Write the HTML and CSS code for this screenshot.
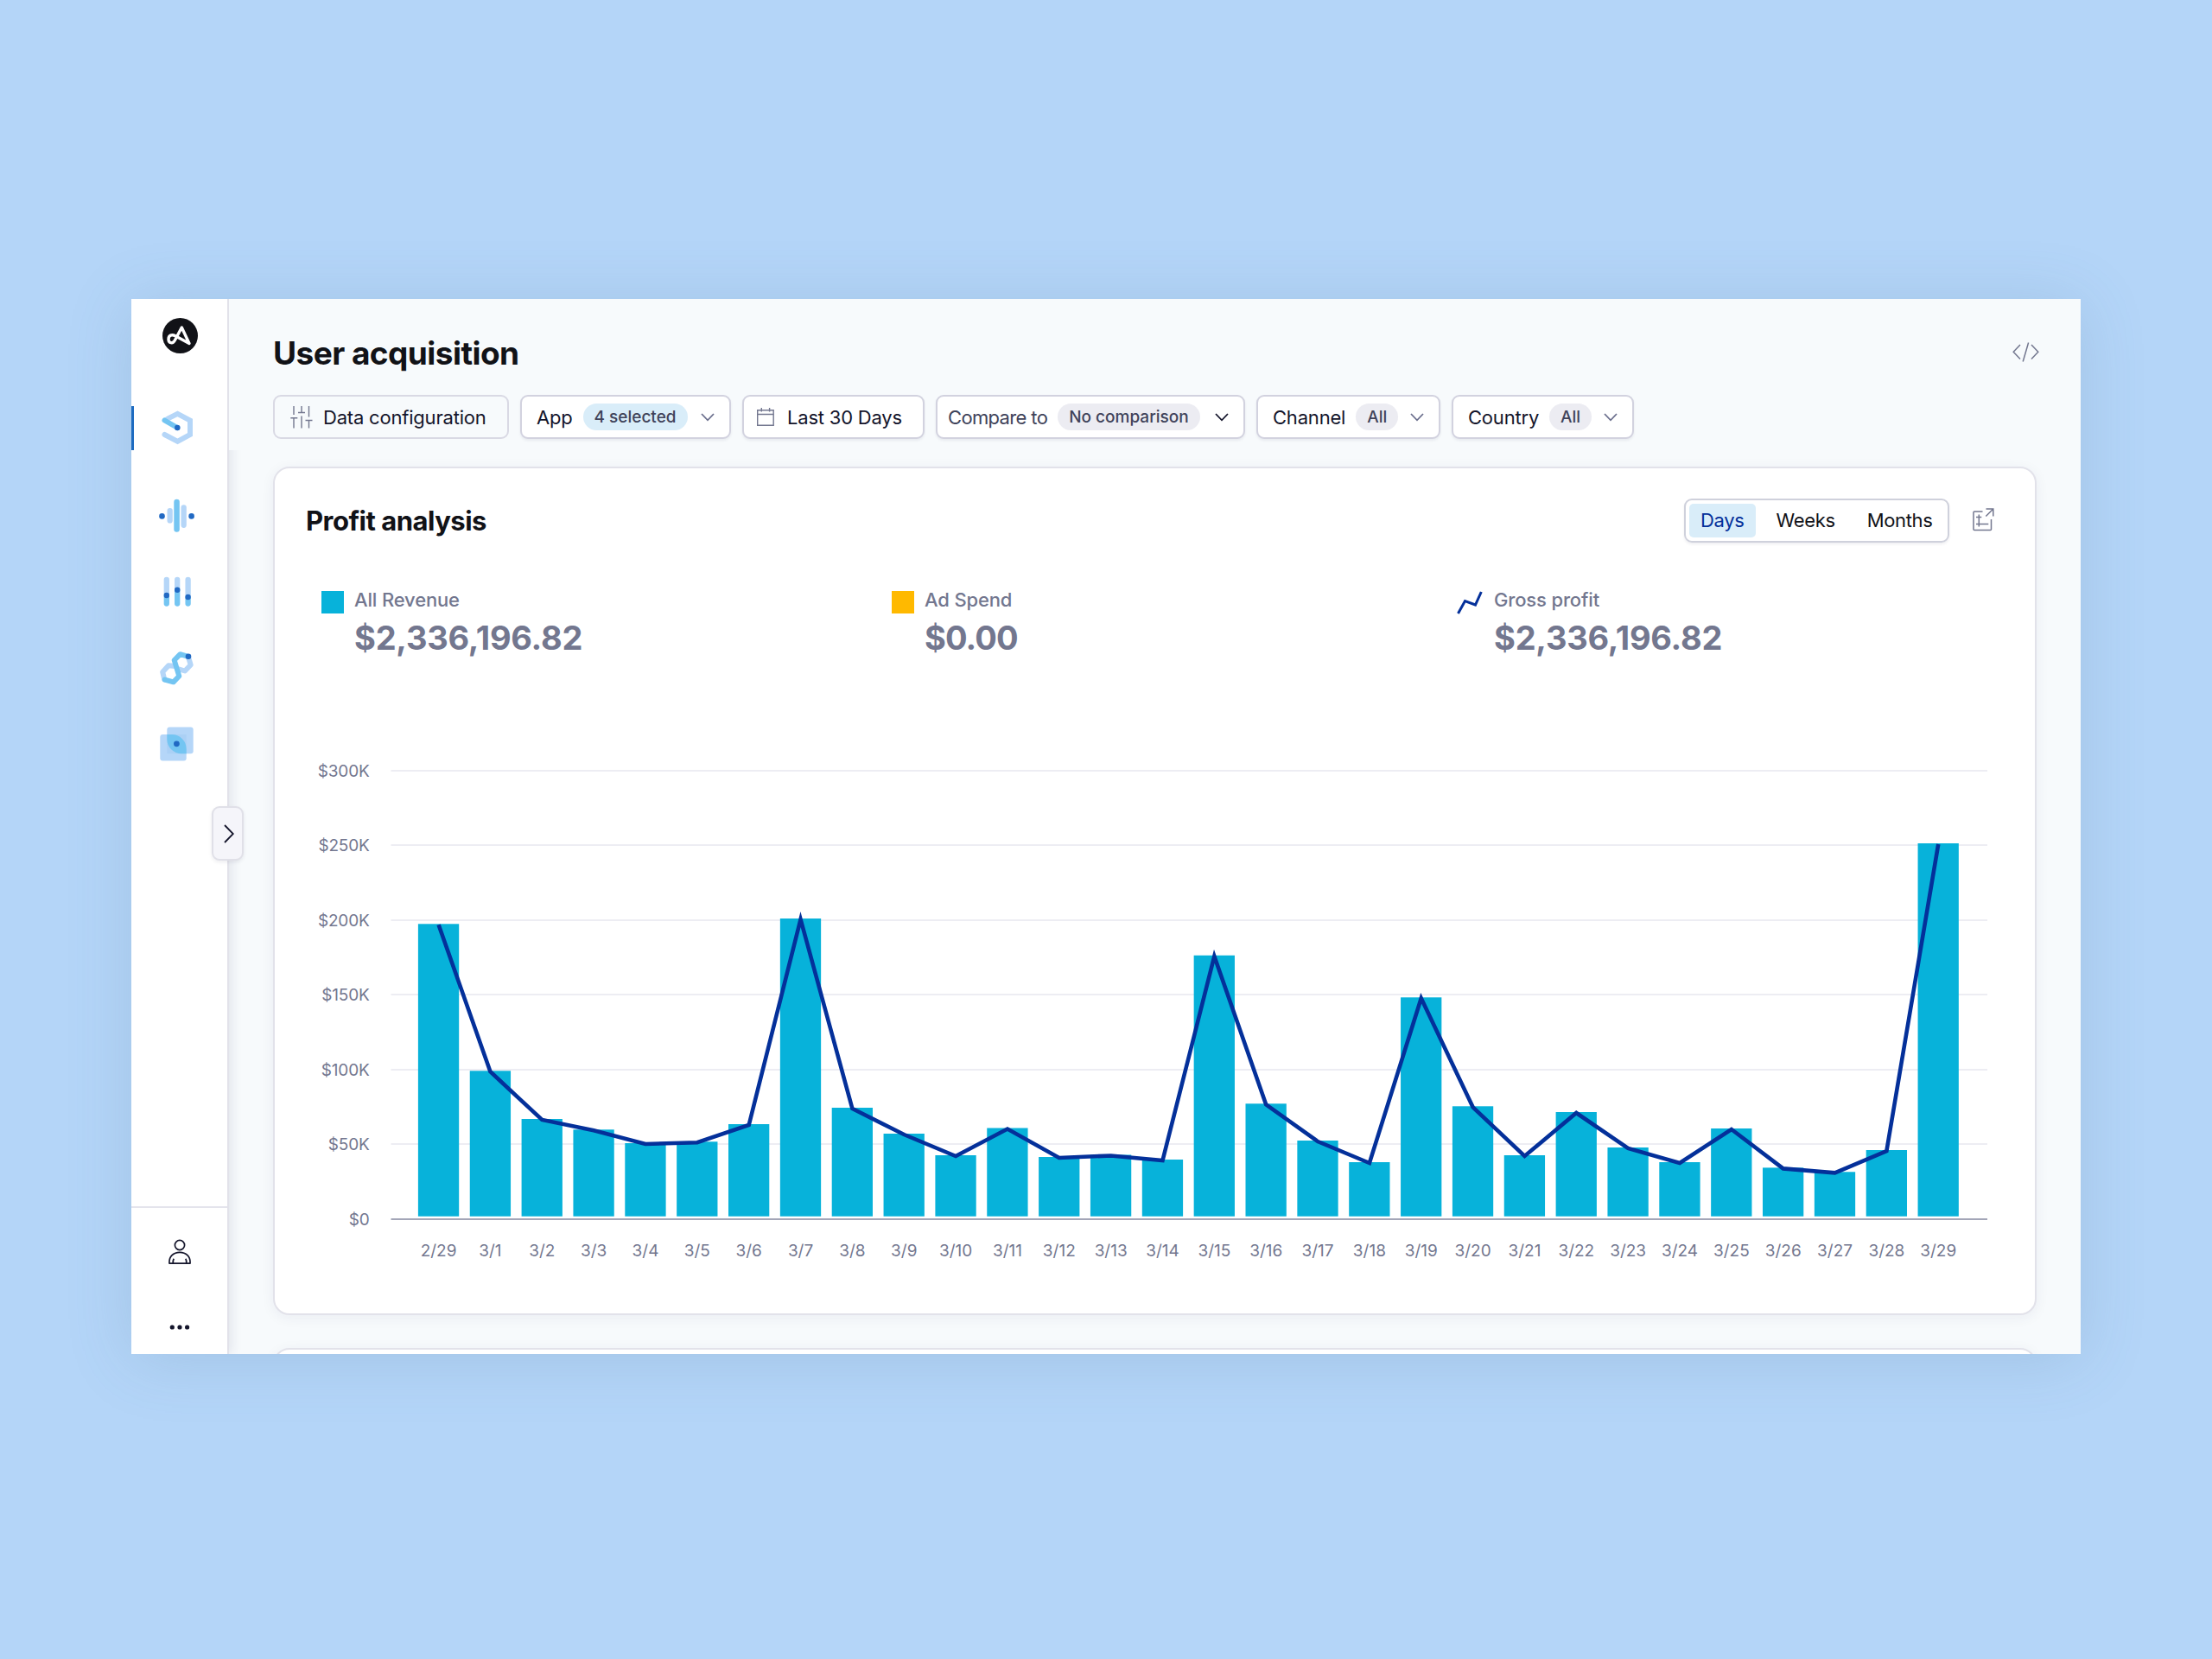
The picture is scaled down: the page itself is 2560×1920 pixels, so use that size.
FILE: index.html
```html
<!DOCTYPE html>
<html lang="en">
<head>
<meta charset="utf-8">
<title>User acquisition</title>
<link rel="stylesheet" href="styles.css">
</head>
<body>
<div class="window">
  <nav class="sidebar">
    <svg class="logo" width="41" height="41" viewBox="0 0 41 41"><circle cx="20.5" cy="20.5" r="20.5" fill="#111217"/><path d="M31 29.5 22.3 11 14.3 26C12 30.3 7 29.2 7 24.7 7 20 11 18.6 14.5 20.6Z" fill="none" stroke="#fff" stroke-width="3.4" stroke-linejoin="round"/></svg>
    <div class="nav-items">
      <a class="nav-item active"><svg width="37" height="40" viewBox="0 0 37 40" fill="none" stroke-width="6" stroke-linecap="round"><path d="M7 9.6 18.5 3.8 33 11.5V28L18.5 35.8 3.5 28" stroke="#b5d6f8"/><path d="M3.5 11.5 18.3 20" stroke="#74c5f2"/><circle cx="18.3" cy="20" r="3.2" fill="#2169c3"/></svg></a>
      <a class="nav-item"><svg width="42" height="40" viewBox="0 0 42 40"><rect x="9.5" y="11" width="6.3" height="17.6" rx="3.1" fill="#b5d6f8"/><rect x="25.5" y="7.3" width="6.3" height="26.6" rx="3.1" fill="#b5d6f8"/><rect x="17.3" y=".8" width="6.5" height="38" rx="3.2" fill="#74c5f2"/><circle cx="3.5" cy="20.4" r="3.3" fill="#2169c3"/><circle cx="37.6" cy="20.4" r="3.3" fill="#2169c3"/></svg></a>
      <a class="nav-item"><svg width="32" height="36" viewBox="0 0 32 36" stroke-width="6.3" stroke-linecap="round"><path d="M3.8 4V20M16.2 4V14M28.6 4V22" stroke="#b5d6f8"/><path d="M3.8 22.5V31.6M16.2 16V31.6M28.6 25V31.6" stroke="#74c5f2"/><g fill="#2169c3"><circle cx="3.8" cy="22" r="3.2"/><circle cx="16.2" cy="15.7" r="3.2"/><circle cx="28.6" cy="24" r="3.2"/></g></svg></a>
      <a class="nav-item"><svg width="39" height="40" viewBox="0 0 39 40" fill="none" stroke-width="6" stroke-linejoin="round" stroke-linecap="round"><path d="M33 7.5 35.7 16.5 29 23.5 20 20.8M18 18 10 17.3 3.2 24.8 5.3 33.5" stroke="#b5d6f8"/><path d="M32 6.6 23.5 4.2 16.7 11 22.3 29.5 15.7 36.3 5.7 33.6" stroke="#74c5f2"/><circle cx="33" cy="6.8" r="3.3" fill="#2169c3"/></svg></a>
      <a class="nav-item"><svg width="39" height="40" viewBox="0 0 39 40"><rect x="8.3" y=".5" width="30.4" height="30.7" rx="3" fill="#b5d6f8"/><rect x=".3" y="9" width="30.4" height="30.4" rx="3" fill="#b5d6f8"/><path d="M8.3 9H30.7V31.2H8.3Z" fill="#abd0f5"/><path d="M8.3 9H14A16.7 16.7 0 0 1 30.7 25.7V31.2H25A16.7 16.7 0 0 1 8.3 14.5Z" fill="#74c5f2"/><circle cx="19.4" cy="19.8" r="3.4" fill="#2169c3"/></svg></a>
    </div>
    <div class="nav-bottom">
      <svg width="26" height="30" viewBox="0 0 26 30" fill="none" stroke="#14152b" stroke-width="1.7" stroke-linejoin="round"><circle cx="13" cy="7" r="5.6"/><path d="M1 28.2C.3 20 6 15.3 13 15.3S25.7 20 25 28.2Z"/><path d="M5.2 28C5 25.5 5.5 24 6.2 22.8M20.8 28C21 25.5 20.5 24 19.8 22.8"/></svg>
      <svg width="24" height="6" viewBox="0 0 24 6" fill="#14152b"><circle cx="3.3" cy="3" r="2.6"/><circle cx="12" cy="3" r="2.6"/><circle cx="20.6" cy="3" r="2.6"/></svg>
    </div>
    <button class="expander"><svg width="12" height="22" viewBox="0 0 12 22" fill="none" stroke="#14152b" stroke-width="1.8"><path d="M1 1 10.8 11 1 21"/></svg></button>
  </nav>

  <main class="main">
    <header class="header">
      <div class="title-row">
        <h1 class="title">User acquisition</h1>
        <svg class="code" width="31" height="23" viewBox="0 0 31 23" fill="none" stroke="#73778f" stroke-width="1.5"><path d="M9 3 1.2 11.3 9 19.5M22 3 29.8 11.3 22 19.5M18.6.5 12.2 22.5"/></svg>
      </div>
      <div class="filters">
        <button class="filter plain config">
          <svg width="26" height="26" viewBox="0 0 26 26" fill="none" stroke="#73778f" stroke-width="1.4"><path d="M4 0V10M.3 13.8H8.3M4 13.8V25.5M13 0V7.5M9 7.5H17M13 11.5V25.5M21.5 0V12.5M17.5 16.5H25.5M21.5 16.5V25.5"/></svg>
          <span class="label">Data configuration</span>
        </button>
        <button class="filter app"><span class="label">App</span><span class="pill blue">4 selected</span><svg class="chev" width="16" height="10" viewBox="0 0 16 10"><path d="M1 1 8 8.3 15 1"/></svg></button>
        <button class="filter date">
          <svg width="20" height="21" viewBox="0 0 20 21" fill="none" stroke="#73778f" stroke-width="1.4"><path d="M.7 2.7H19.2V20.3H.7ZM.7 7.5H19.2M5.3 0V4.5M14.6 0V4.5"/></svg>
          <span class="label">Last 30 Days</span>
        </button>
        <button class="filter compare"><span class="label soft">Compare to</span><span class="pill">No comparison</span><svg class="chev dark" width="16" height="10" viewBox="0 0 16 10"><path d="M1 1 8 8.3 15 1"/></svg></button>
        <button class="filter channel"><span class="label">Channel</span><span class="pill">All</span><svg class="chev" width="16" height="10" viewBox="0 0 16 10"><path d="M1 1 8 8.3 15 1"/></svg></button>
        <button class="filter country"><span class="label">Country</span><span class="pill">All</span><svg class="chev" width="16" height="10" viewBox="0 0 16 10"><path d="M1 1 8 8.3 15 1"/></svg></button>
      </div>
    </header>

    <div class="content">
      <section class="card">
        <div class="card-head">
          <h2 class="card-title">Profit analysis</h2>
          <div class="segmented"><span class="seg on">Days</span><span class="seg">Weeks</span><span class="seg">Months</span></div>
          <svg class="export" width="25" height="27" viewBox="0 0 25 27" fill="none" stroke="#73778f" stroke-width="1.5"><path d="M11.5 4H2Q1 4 1 5V24.5Q1 25.5 2 25.5H20.5Q21.5 25.5 21.5 24.5V13M15.5 1H23.8V9.5M23.8 1 15.3 9.5M7.3 7.5V21.5M4 10.5H10.3M4 18.6H18.3"/></svg>
        </div>
        <div class="legend">
          <div class="metric"><i class="swatch revenue"></i><div class="metric-text"><span class="name">All Revenue</span><span class="value">$2,336,196.82</span></div></div>
          <div class="metric"><i class="swatch spend"></i><div class="metric-text"><span class="name">Ad Spend</span><span class="value tight">$0.00</span></div></div>
          <div class="metric"><svg class="spark" width="30" height="27" viewBox="0 0 30 27" fill="none" stroke="#04309a" stroke-width="3"><path d="M1.5 26 9.5 11.5 21.5 16 28.3 1"/></svg><div class="metric-text"><span class="name">Gross profit</span><span class="value">$2,336,196.82</span></div></div>
        </div>
        <svg class="chart" id="chart" width="1960" height="600" viewBox="350 870 1960 600"></svg>
      </section>
      <section class="card next"></section>
    </div>
  </main>
</div>
<script src="chart.js"></script>
</body>
</html>
```
FILE: styles.css
```css
* { box-sizing: border-box; }

body {
  margin: 0;
  width: 2560px;
  height: 1920px;
  overflow: hidden;
  padding: 346px 152px 0;
  background: #b4d5f8;
  font-family: Inter, "Liberation Sans", sans-serif;
  color: #111217;
}

h1, h2 { margin: 0; }

button {
  font: inherit;
  color: inherit;
  margin: 0;
}

svg { display: block; flex: none; }

.window {
  display: flex;
  width: 2256px;
  height: 1221px;
  background: #f7fafc;
  box-shadow: 0 6px 70px rgba(80, 115, 150, 0.19);
}

/* Sidebar */
.sidebar {
  position: relative;
  z-index: 1;
  display: flex;
  flex-direction: column;
  flex: none;
  width: 113px;
  background: #fff;
  border-right: 2px solid #e2e2ea;
  box-shadow: 3px 0 12px rgba(40, 40, 90, 0.1);
  clip-path: inset(0 -30px 0 0);
}

.logo { margin: 22px 0 0 36px; }

.nav-items {
  display: flex;
  flex-direction: column;
  gap: 37px;
  margin-top: 61px;
}

.nav-item {
  display: flex;
  align-items: center;
  justify-content: center;
  height: 51px;
  padding: 0 6px 2px 0;
}

.nav-item.active {
  margin-bottom: 14px;
  padding-right: 8px;
  border-left: 3px solid #1d6bc0;
}

.nav-bottom {
  display: flex;
  flex-direction: column;
  align-items: center;
  gap: 69px;
  height: 171px;
  margin-top: auto;
  padding-top: 36px;
  border-top: 2px solid #e4e4ec;
}

.expander {
  position: absolute;
  left: 93px;
  top: 587px;
  display: flex;
  align-items: center;
  justify-content: center;
  width: 37px;
  height: 63px;
  padding: 0 0 0 3px;
  border: 2px solid #e0e0e8;
  border-radius: 9px;
  background: #f5f5fa;
  box-shadow: 0 2px 4px rgba(30, 30, 70, 0.08);
}

/* Main column */
.main {
  display: flex;
  flex-direction: column;
  flex: 1;
  min-width: 0;
}

.header {
  position: relative;
  z-index: 2;
  height: 175px;
  padding: 42px 0 0 51px;
  background: #f7fafc;
}

.title-row {
  display: flex;
  justify-content: space-between;
  height: 69px;
  padding-right: 48px;
}

.title {
  font-size: 37px;
  line-height: 41px;
  font-weight: 700;
  letter-spacing: -0.55px;
}

.code { margin-top: 8px; }

.filters { display: flex; }

.filter {
  display: flex;
  align-items: center;
  flex: none;
  height: 51px;
  padding: 0 17px;
  border: 2px solid #d2d2df;
  border-radius: 9px;
  background: #fff;
  box-shadow: 0 2px 3px rgba(30, 30, 70, 0.07);
  font-size: 22px;
  line-height: 30px;
  letter-spacing: -0.2px;
  white-space: nowrap;
}

.plain { background: #f7fafc; box-shadow: none; border-color: #d9d9e4; }
.config { width: 273px; margin-right: 13px; gap: 12px; padding-left: 18px; }
.app { width: 244px; margin-right: 13px; }
.date { width: 211px; margin-right: 13px; gap: 15px; padding-left: 15px; }
.compare { width: 358px; margin-right: 13px; padding-left: 12px; }
.channel { width: 213px; margin-right: 13px; }
.country { width: 211px; }

.label { color: #14152b; }
.soft { color: #40435a; letter-spacing: -0.65px; }

.pill {
  height: 31px;
  margin-left: 12px;
  padding: 0 13px;
  border-radius: 16px;
  background: #ececf2;
  color: #40435a;
  font-size: 19px;
  line-height: 32px;
  font-weight: 500;
  letter-spacing: 0;
}

.blue { background: #d9edf9; }

.chev {
  margin-left: auto;
  fill: none;
  stroke: #6b6f8d;
  stroke-width: 1.8;
}

.dark { stroke: #14152b; }

/* Cards */
.content {
  flex: 1;
  min-height: 0;
  overflow: hidden;
  padding: 19px 51px 0;
}

.card {
  height: 982px;
  border: 2px solid #e2e2ea;
  border-radius: 19px;
  background: #fff;
  box-shadow: 0 3px 16px rgba(40, 40, 90, 0.06);
}

.next { margin-top: 38px; }

.card-head {
  display: flex;
  align-items: flex-start;
  padding: 35px 47px 0 36px;
}

.card-title {
  flex: 1;
  font-size: 31px;
  line-height: 52px;
  font-weight: 700;
  letter-spacing: -0.5px;
}

.segmented {
  display: flex;
  width: 307px;
  height: 51px;
  padding: 4px;
  border: 2px solid #cfd1dc;
  border-radius: 9px;
  box-shadow: 0 2px 3px rgba(30, 30, 70, 0.07);
}

.seg {
  padding: 0 13px;
  margin-right: 11px;
  border-radius: 5px;
  font-size: 22px;
  line-height: 38px;
  letter-spacing: -0.35px;
}

.on { background: #d9edf9; color: #04309a; }

.export { margin: 11px 0 0 27px; }

.legend {
  display: grid;
  grid-template-columns: 660px 659px 1fr;
  height: 120px;
  margin-top: 50px;
  padding-left: 54px;
}

.metric { display: flex; }

.swatch {
  width: 26px;
  height: 26px;
  margin: 5px 12px 0 0;
}

.revenue { background: #07b2da; }
.spend { background: #ffb900; }
.spark { margin: 5px 13px 0 -5px; }

.metric-text {
  display: flex;
  flex-direction: column;
  color: #73778f;
}

.name {
  font-size: 22px;
  line-height: 30px;
  font-weight: 500;
  letter-spacing: -0.15px;
}

.value {
  font-size: 38px;
  line-height: 58px;
  font-weight: 700;
  letter-spacing: -0.25px;
}

.tight { letter-spacing: -0.9px; }

.chart { margin: 71px 0 0 32px; }
.grid-line { stroke: #ededf3; stroke-width: 2; }
.axis-line { stroke: #a3a6b8; stroke-width: 2; }
.bar { fill: #07b2da; }

.profit {
  fill: none;
  stroke: #04309a;
  stroke-width: 4.6;
  stroke-miterlimit: 10;
}

.tick {
  fill: #73778f;
  font-size: 19px;
}

.tick-x { text-anchor: middle; }
.tick-y { text-anchor: end; letter-spacing: -0.2px; }
```
FILE: chart.js
```js
const NS = 'http://www.w3.org/2000/svg';
const svg = document.getElementById('chart');
const add = (tag, attrs, text) => {
  const el = document.createElementNS(NS, tag);
  for (const k in attrs) el.setAttribute(k, attrs[k]);
  if (text) el.textContent = text;
  svg.appendChild(el);
};

// Top edge of each day's bar, in chart units
const days = [
  ['2/29', 1069.3], ['3/1', 1239.3], ['3/2', 1295], ['3/3', 1307.3], ['3/4', 1323],
  ['3/5', 1321.3], ['3/6', 1301], ['3/7', 1063], ['3/8', 1282], ['3/9', 1312],
  ['3/10', 1337], ['3/11', 1305.5], ['3/12', 1339], ['3/13', 1336.5], ['3/14', 1342],
  ['3/15', 1105.7], ['3/16', 1277.3], ['3/17', 1320], ['3/18', 1345], ['3/19', 1154.3],
  ['3/20', 1280.3], ['3/21', 1337], ['3/22', 1287], ['3/23', 1328], ['3/24', 1345],
  ['3/25', 1306], ['3/26', 1351.4], ['3/27', 1356.3], ['3/28', 1331], ['3/29', 976]
];
const base = 1407.7;
const centre = i => 507.6 + i * 59.85;

['$300K', '$250K', '$200K', '$150K', '$100K', '$50K', '$0'].forEach((t, i) => {
  const y = 891.6 + i * 86.57;
  add('line', { class: i === 6 ? 'axis-line' : 'grid-line', x1: 452.5, x2: 2300, y1: Math.round(y), y2: Math.round(y) });
  add('text', { class: 'tick tick-y', x: 427.5, y: y + 7 }, t);
});

days.forEach(([d, y], i) => {
  add('rect', { class: 'bar', x: centre(i) - 23.7, y, width: 47.3, height: base - y });
  add('text', { class: 'tick tick-x', x: centre(i), y: 1454 }, d);
});

add('polyline', { class: 'profit', points: days.map(([, y], i) => `${centre(i)},${y + 1}`).join(' ') });
```
